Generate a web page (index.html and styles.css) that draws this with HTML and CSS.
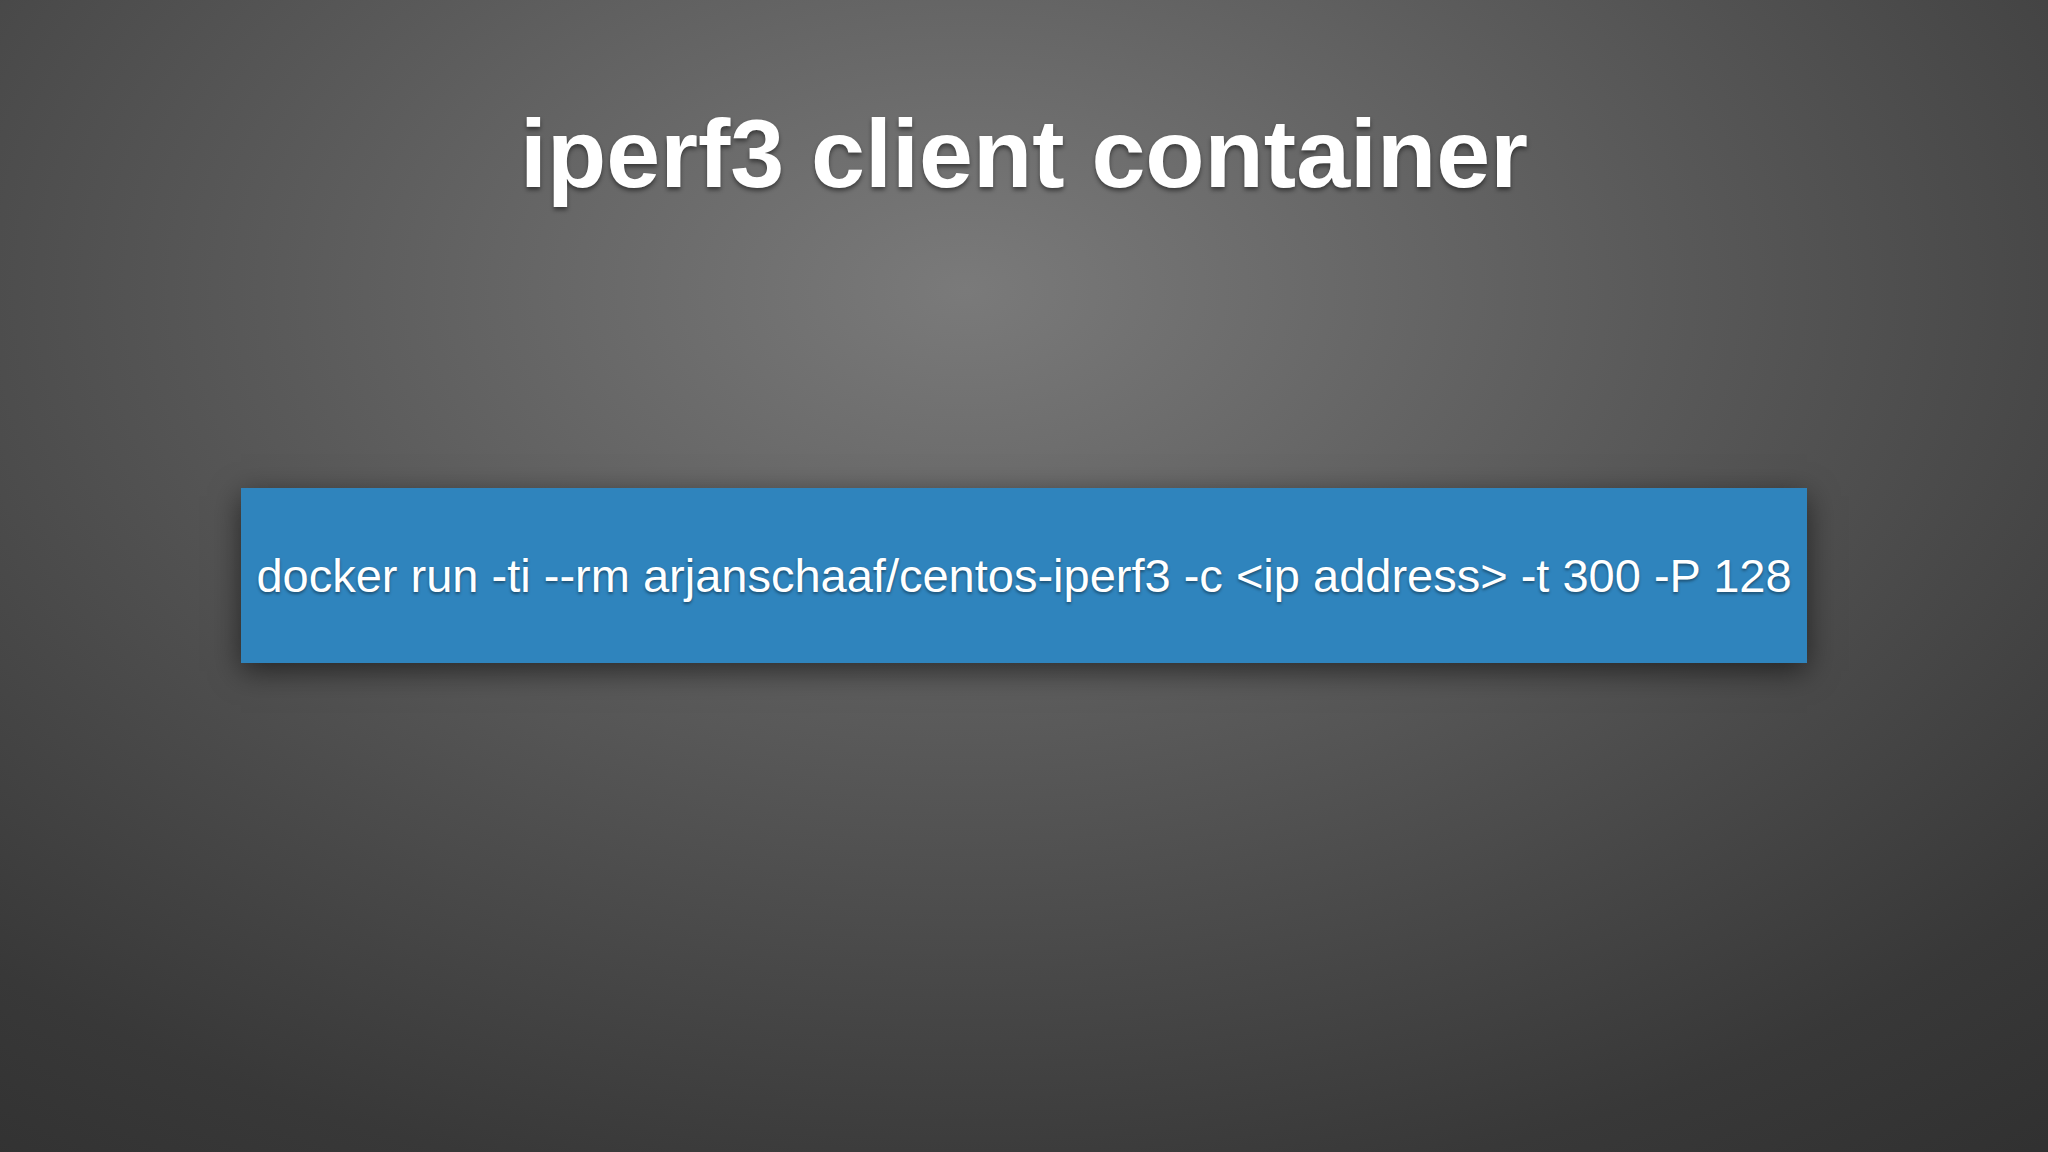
FILE: index.html
```html
<!DOCTYPE html>
<html>
<head>
<meta charset="utf-8">
<link rel="stylesheet" href="styles.css">
</head>
<body>
<main class="slide">
  <h1 class="title">iperf3 client container</h1>
  <div class="command">docker run -ti --rm arjanschaaf/centos-iperf3 -c &lt;ip address&gt; -t 300 -P 128</div>
</main>
</body>
</html>
```
FILE: styles.css
```css
html, body {
  margin: 0;
  padding: 0;
  width: 2048px;
  height: 1152px;
  overflow: hidden;
}
body {
  font-family: "Liberation Sans", Arial, sans-serif;
  background: #363636;
}
.slide {
  width: 2048px;
  height: 1152px;
  display: flex;
  flex-direction: column;
  align-items: center;
  background:
    radial-gradient(ellipse 1800px 1150px at 965px 290px, #7a7a7a 0%, #6b6b6b 18%, #5a5a5a 38%, #484848 60%, #383838 80%, #2f2f2f 100%);
}
.title {
  margin: 105px 0 0 0;
  font-size: 97px;
  line-height: 1;
  font-weight: bold;
  color: #ffffff;
  text-shadow: 0 3px 4px rgba(0, 0, 0, 0.45);
}
.command {
  margin-top: 286px;
  width: 1566px;
  height: 175px;
  background: #2f84bd;
  display: flex;
  align-items: center;
  justify-content: center;
  color: #ffffff;
  font-size: 47px;
  line-height: 1;
  text-shadow: 0 2px 3px rgba(0, 0, 0, 0.4);
  box-shadow: 0 8px 28px rgba(0, 0, 0, 0.55);
}
```
